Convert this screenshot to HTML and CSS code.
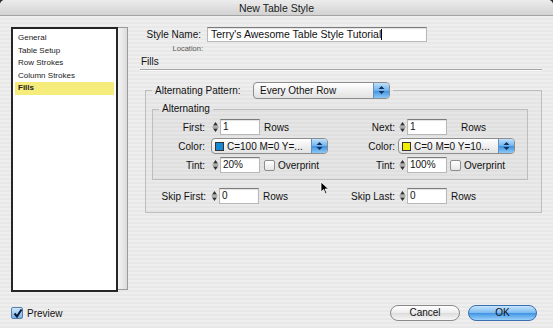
FILE: index.html
```html
<!DOCTYPE html>
<html lang="en">
<head>
<meta charset="UTF-8">
<title>New Table Style</title>
<link rel="stylesheet" href="styles.css">
</head>
<body>
<div class="window">
	<div class="titlebar">New Table Style</div>

	<div class="content">
		<div class="sidebar">
			<ul class="list">
				<li>General</li>
				<li>Table Setup</li>
				<li>Row Strokes</li>
				<li>Column Strokes</li>
				<li class="sel">Fills</li>
			</ul>
			<div class="scroll"></div>
		</div>

		<div class="main">
			<div class="namegrid">
				<span class="lbl">Style Name:</span>
				<div class="field namefield">Terry's Awesome Table Style Tutorial<span class="caret"></span></div>
				<span class="loc">Location:</span>
				<span></span>
			</div>
			<div class="section">Fills</div>
			<div class="sep"></div>

			<fieldset class="outer">
				<legend class="olegend">
					<span>Alternating Pattern:</span>
					<span class="popup pattern"><span class="ptext">Every Other Row</span><span class="parrow"><svg width="9" height="10" viewBox="0 0 9 10"><path d="M4.5 1 L7.5 4 H1.5 Z M4.5 9 L7.5 6 H1.5 Z" fill="#14305a"/></svg></span></span>
				</legend>

				<fieldset class="inner">
					<legend class="ilegend">Alternating</legend>
					<div class="altgrid">
						<span class="lbl l1">First:</span>
						<div class="ctl">
							<span class="step"><svg width="9" height="16" viewBox="0 0 9 16"><path d="M4.5 3 L7 6.5 H2 Z M4.5 13 L7 9.5 H2 Z" fill="#333"/><path d="M1.5 8 H7.5" stroke="#777" stroke-width="1"/></svg></span>
							<div class="field num">1</div>
							<span class="unit">Rows</span>
						</div>
						<span class="lbl l2">Next:</span>
						<div class="ctl">
							<span class="step"><svg width="9" height="16" viewBox="0 0 9 16"><path d="M4.5 3 L7 6.5 H2 Z M4.5 13 L7 9.5 H2 Z" fill="#333"/><path d="M1.5 8 H7.5" stroke="#777" stroke-width="1"/></svg></span>
							<div class="field num">1</div>
							<span class="unit unit-r">Rows</span>
						</div>

						<span class="lbl l1">Color:</span>
						<div class="ctl">
							<span class="popup color"><span class="swatch blue"></span><span class="ptext">C=100 M=0 Y=...</span><span class="parrow"><svg width="9" height="10" viewBox="0 0 9 10"><path d="M4.5 1 L7.5 4 H1.5 Z M4.5 9 L7.5 6 H1.5 Z" fill="#14305a"/></svg></span></span>
						</div>
						<span class="lbl l2">Color:</span>
						<div class="ctl">
							<span class="popup color"><span class="swatch yellow"></span><span class="ptext">C=0 M=0 Y=10...</span><span class="parrow"><svg width="9" height="10" viewBox="0 0 9 10"><path d="M4.5 1 L7.5 4 H1.5 Z M4.5 9 L7.5 6 H1.5 Z" fill="#14305a"/></svg></span></span>
						</div>

						<span class="lbl l1">Tint:</span>
						<div class="ctl">
							<span class="step"><svg width="9" height="16" viewBox="0 0 9 16"><path d="M4.5 3 L7 6.5 H2 Z M4.5 13 L7 9.5 H2 Z" fill="#333"/><path d="M1.5 8 H7.5" stroke="#777" stroke-width="1"/></svg></span>
							<div class="field num">20%</div>
							<span class="check"></span><span class="unit">Overprint</span>
						</div>
						<span class="lbl l2">Tint:</span>
						<div class="ctl">
							<span class="step"><svg width="9" height="16" viewBox="0 0 9 16"><path d="M4.5 3 L7 6.5 H2 Z M4.5 13 L7 9.5 H2 Z" fill="#333"/><path d="M1.5 8 H7.5" stroke="#777" stroke-width="1"/></svg></span>
							<div class="field num">100%</div>
							<span class="check check-r"></span><span class="unit">Overprint</span>
						</div>
					</div>
				</fieldset>

				<div class="skipgrid">
					<span class="lbl s1">Skip First:</span>
					<div class="ctl">
						<span class="step"><svg width="9" height="16" viewBox="0 0 9 16"><path d="M4.5 3 L7 6.5 H2 Z M4.5 13 L7 9.5 H2 Z" fill="#333"/><path d="M1.5 8 H7.5" stroke="#777" stroke-width="1"/></svg></span>
						<div class="field num">0</div>
						<span class="unit">Rows</span>
					</div>
					<span class="lbl s2">Skip Last:</span>
					<div class="ctl">
						<span class="step"><svg width="9" height="16" viewBox="0 0 9 16"><path d="M4.5 3 L7 6.5 H2 Z M4.5 13 L7 9.5 H2 Z" fill="#333"/><path d="M1.5 8 H7.5" stroke="#777" stroke-width="1"/></svg></span>
						<div class="field num">0</div>
						<span class="unit">Rows</span>
					</div>
				</div>
			</fieldset>
		</div>
	</div>

	<div class="footer">
		<label class="preview"><span class="pbox"><svg width="11" height="11" viewBox="0 0 11 11"><path d="M2.5 5.5 L5 8.5 L9.5 1.5" fill="none" stroke="#0a1a3a" stroke-width="2"/></svg></span>Preview</label>
		<div class="buttons">
			<span class="btn cancel">Cancel</span>
			<span class="btn ok">OK</span>
		</div>
	</div>

	<svg class="pointer" width="10" height="14" viewBox="0 0 10 14"><path d="M1 1 L1 11 L3.5 8.5 L5.5 13 L7 12.3 L5 8 L8.5 8 Z" fill="#000" stroke="#fff" stroke-width="0.8"/></svg>
</div>
</body>
</html>
```

FILE: styles.css
```css
html,body{margin: 0;padding: 0;background: #2a2a2a;}
.window{
	position: relative;
	width: 553px;
	height: 328px;
	overflow: hidden;
	border-radius: 5px 5px 0 0;
	font-family: "Liberation Sans", Arial, sans-serif;
	font-size: 10px;
	color: #111;
	background: repeating-linear-gradient(#eeeeee 0 2px, #e8e8e8 2px 4px);
	display: flex;
	flex-direction: column;
}
.titlebar{
	height: 15px;
	line-height: 16px;
	text-align: center;
	font-size: 10.5px;
	color: #1a1a1a;
	background: linear-gradient(#ececec, #d2d2d2);
	border-bottom: 1px solid #a3a3a3;
}
.content{
	display: flex;
	align-items: flex-start;
	padding-top: 11px;
	height: 263px;
}

/* list on the left */
.sidebar{
	display: flex;
	margin-left: 11px;
	width: 117px;
	height: 263px;
}
.list{
	list-style: none;
	margin: 0;
	padding: 3px 2px;
	width: 102px;
	height: 255px;
	background: #fff;
	border: 2px solid #262626;
	font-size: 8px;
	color: #222;
}
.list li{height: 12.5px;line-height: 12px;padding-left: 3px;}
.list li.sel{background: #f6ec7c;font-weight: bold;}
.scroll{
	width: 9px;
	height: 261px;
	background: linear-gradient(90deg, #f4f4f4, #dcdcdc);
	border: 1px solid #9a9a9a;
	border-left: none;
}

/* right side */
.main{
	margin-left: 12px;
	width: 405px;
}
.namegrid{
	display: grid;
	grid-template-columns: 67px 220px;
	align-items: center;
}
.namegrid .lbl{text-align: right;padding-right: 6px;}
.field{
	height: 14px;
	line-height: 14px;
	background: #fff;
	border: 1px solid #b8b8b8;
	border-top-color: #7c7c7c;
	box-shadow: inset 0 1px 1px rgba(0,0,0,0.12);
	padding-left: 2px;
	box-sizing: content-box;
	white-space: nowrap;
	overflow: hidden;
}
.namefield{height: 13px;line-height: 13px;font-size: 10.5px;padding-left: 3px;}
.caret{display: inline-block;width: 1px;height: 11px;background: #000;vertical-align: -2px;}
.loc{
	font-size: 7.5px;
	color: #555;
	text-align: right;
	padding-right: 4px;
	margin-top: 2px;
	line-height: 9px;
}
.section{margin-top: 3px;font-size: 10px;line-height: 12px;padding-left: 1px;}
.sep{height: 0;border-top: 1px solid #a5a5a5;border-bottom: 1px solid #fafafa;margin: 1px 3px 0 0;}

fieldset{margin: 0;min-width: 0;}
.outer{
	margin: 11px 3px 0 5px;
	padding: 5px 13px 8px 6px;
	border: 1px solid #bdbdbd;
	background: rgba(0,0,0,0.015);
}
.olegend{
	padding: 0 3px;
	display: flex;
	align-items: center;
	height: 16px;
}
.olegend > span:first-child{width: 92px;margin-right: 6px;white-space: nowrap;}

.popup{
	display: flex;
	align-items: center;
	height: 14px;
	border: 1px solid #8d8d8d;
	border-radius: 4px;
	background: linear-gradient(#ffffff, #f0f0f0 50%, #e2e2e2);
	overflow: hidden;
}
.pattern{width: 135px;height: 15px;}
.ptext{flex: 1;padding-left: 6px;white-space: nowrap;overflow: hidden;}
.parrow{
	width: 15px;
	height: 100%;
	display: flex;
	align-items: center;
	justify-content: center;
	background: linear-gradient(#bfe0fb, #6fb3ee 50%, #3e90e0 51%, #8cc8f6);
	border-left: 1px solid #5e8fc2;
}
.color{width: 115px;}
.color .ptext{padding-left: 3px;}
.swatch{width: 7px;height: 7px;border: 1px solid #333;margin-left: 3px;}
.swatch.blue{background: #1689d4;}
.swatch.yellow{background: #f2ee00;}

.inner{
	padding: 4px 0 6px 6px;
	border: 1px solid #bdbdbd;
	background: rgba(0,0,0,0.02);
}
.ilegend{padding: 0 3px;line-height: 12px;}
.altgrid{
	display: grid;
	grid-template-columns: 52px 117px 70px 117px;
	grid-auto-rows: 16px;
	row-gap: 3px;
	align-items: center;
}
.lbl{text-align: right;white-space: nowrap;}
.l1{padding-right: 6px;}
.l2{padding-right: 3px;}
.ctl{display: flex;align-items: center;height: 16px;}
.step{width: 9px;height: 16px;display: block;}
.step svg{display: block;}
.num{width: 36px;height: 14px;}
.unit{margin-left: 4px;white-space: nowrap;}
.unit-r{margin-left: 14px;}
.check{
	width: 9px;
	height: 9px;
	margin-left: 4px;
	border: 1px solid #8e8e8e;
	border-radius: 2px;
	background: linear-gradient(#ffffff, #e6e6e6);
}
.check-r{margin-left: 3px;}
.check + .unit{margin-left: 3px;}

.skipgrid{
	display: grid;
	grid-template-columns: 58px 120px 68px 120px;
	align-items: center;
	margin-top: 8px;
}
.s1{padding-right: 4px;}
.s2{padding-right: 3px;}

/* bottom */
.footer{
	display: flex;
	align-items: center;
	justify-content: space-between;
	margin-top: 15px;
	height: 16px;
	padding: 0 16px 0 11px;
}
.preview{display: flex;align-items: center;font-size: 10px;}
.pbox{
	width: 10px;
	height: 10px;
	margin-right: 4px;
	border: 1px solid #5a7ea8;
	border-radius: 2px;
	background: linear-gradient(#cfe6fb, #77b2ea);
}
.pbox svg{display: block;}
.buttons{display: flex;gap: 8px;}
.btn{
	display: block;
	height: 14px;
	line-height: 14px;
	text-align: center;
	border-radius: 8px;
	font-size: 10px;
}
.cancel{
	width: 68px;
	border: 1px solid #8a8a8a;
	background: linear-gradient(#ffffff, #ececec 50%, #dcdcdc 51%, #f6f6f6);
}
.ok{
	width: 67px;
	border: 1px solid #3a6fb0;
	background: linear-gradient(#c6e4fc, #79b9f1 50%, #3d93e4 51%, #9ad2fa);
}
.pointer{position: absolute;left: 320px;top: 181px;}
```
